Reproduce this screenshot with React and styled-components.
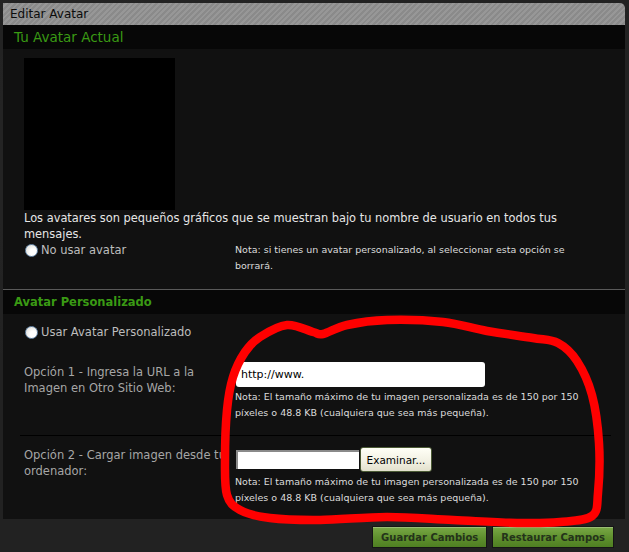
import React from 'react';
import styled, { createGlobalStyle } from 'styled-components';

const GlobalStyle = createGlobalStyle`
  html, body {
    margin: 0;
    padding: 0;
    background: #232323;
  }
  body {
    font-family: "DejaVu Sans", "Liberation Sans", sans-serif;
  }
`;

const scribblePoints = [
  [260, 337], [287, 325], [313, 332], [323, 334], [347, 325], [387, 320],
  [443, 322], [487, 331], [533, 338], [558, 343], [577, 361], [592, 395],
  [599, 443], [598, 493], [592, 516], [560, 522], [520, 523], [453, 520],
  [387, 517], [320, 520], [270, 518], [240, 510], [227, 495], [225, 460],
  [227, 410], [233, 377], [245, 352],
];

// closed catmull-rom -> cubic bezier
const smoothPath = (pts) => {
  const n = pts.length;
  let d = `M${pts[0][0]},${pts[0][1]}`;
  for (let i = 0; i < n; i++) {
    const p0 = pts[(i - 1 + n) % n];
    const p1 = pts[i];
    const p2 = pts[(i + 1) % n];
    const p3 = pts[(i + 2) % n];
    const c1x = p1[0] + (p2[0] - p0[0]) / 6;
    const c1y = p1[1] + (p2[1] - p0[1]) / 6;
    const c2x = p2[0] - (p3[0] - p1[0]) / 6;
    const c2y = p2[1] - (p3[1] - p1[1]) / 6;
    d += ` C${c1x},${c1y} ${c2x},${c2y} ${p2[0]},${p2[1]}`;
  }
  return d + ' Z';
};

const App = () => {
  return (
    <Page>
      <GlobalStyle />
      <Panel>
        <TitleBar>Editar Avatar</TitleBar>
        <SectionHead>Tu Avatar Actual</SectionHead>
        <SectionBody $pad="9px 10px 15px 21px">
          <AvatarBox />
          <Description>
            Los avatares son pequeños gráficos que se muestran bajo tu nombre de usuario en todos tus mensajes.
          </Description>
          <FieldRow>
            <RadioLabel>
              <Radio type="radio" name="avatar" />
              No usar avatar
            </RadioLabel>
            <Note>Nota: si tienes un avatar personalizado, al seleccionar esta opción se borrará.</Note>
          </FieldRow>
        </SectionBody>
        <SectionHead $bold $ruled>Avatar Personalizado</SectionHead>
        <SectionBody $pad="10px 0 13px 0">
          <RadioRow>
            <RadioLabel>
              <Radio type="radio" name="avatar" />
              Usar Avatar Personalizado
            </RadioLabel>
          </RadioRow>
          <OptionRow $ruled>
            <FieldLabel>Opción 1 - Ingresa la URL a la Imagen en Otro Sitio Web:</FieldLabel>
            <div>
              <UrlInput type="text" defaultValue="http://www." />
              <Note>Nota: El tamaño máximo de tu imagen personalizada es de 150 por 150 píxeles o 48.8 KB (cualquiera que sea más pequeña).</Note>
            </div>
          </OptionRow>
          <OptionRow $top="11px">
            <FieldLabel $tight>
              Opción 2 - Cargar imagen desde tu
              <br />
              ordenador:
            </FieldLabel>
            <div>
              <FileControl>
                <FileText />
                <BrowseButton type="button">Examinar...</BrowseButton>
              </FileControl>
              <Note>Nota: El tamaño máximo de tu imagen personalizada es de 150 por 150 píxeles o 48.8 KB (cualquiera que sea más pequeña).</Note>
            </div>
          </OptionRow>
        </SectionBody>
      </Panel>
      <Footer>
        <ActionButton type="button">Guardar Cambios</ActionButton>
        <ActionButton type="button">Restaurar Campos</ActionButton>
      </Footer>
      <Scribble width="629" height="552" viewBox="0 0 629 552">
        <defs>
          <filter id="soft" x="-5%" y="-5%" width="110%" height="110%">
            <feGaussianBlur stdDeviation="0.7" />
          </filter>
        </defs>
        <path
          d={smoothPath(scribblePoints)}
          fill="none"
          stroke="#ff0000"
          strokeWidth="8.5"
          strokeLinejoin="round"
          filter="url(#soft)"
        />
      </Scribble>
    </Page>
  );
};

export default App;

const Page = styled.div`
  position: relative;
  width: 629px;
  height: 552px;
  padding: 3px 4px 0 3px;
  box-sizing: border-box;
  background:
    radial-gradient(circle at 20% 30%, rgba(255, 255, 255, 0.02), transparent 40%),
    #222;
  overflow: hidden;
`;

const Panel = styled.div`
  background: #111;
  border-top-right-radius: 5px;
  overflow: hidden;
`;

const TitleBar = styled.div`
  height: 22px;
  line-height: 22px;
  padding-left: 7px;
  font-size: 12px;
  color: #0c0c0c;
  background: repeating-linear-gradient(
    135deg,
    #8a8a8a 0px,
    #8a8a8a 2px,
    #979797 2px,
    #979797 4px
  );
`;

const SectionHead = styled.div`
  height: 24px;
  line-height: 24px;
  padding-left: 11px;
  font-size: ${(p) => (p.$bold ? '11.5px' : '13.5px')};
  font-weight: ${(p) => (p.$bold ? 'bold' : 'normal')};
  color: #3a9a14;
  background: #070707;
  border-top: ${(p) => (p.$ruled ? '1px solid #5a5a5a' : 'none')};
`;

const SectionBody = styled.div`
  padding: ${(p) => p.$pad};
  background: #111;
`;

const AvatarBox = styled.div`
  width: 151px;
  height: 152px;
  background: #000;
`;

const Description = styled.div`
  font-size: 11.4px;
  line-height: 16px;
  color: #e6e6e6;
`;

const FieldRow = styled.div`
  display: grid;
  grid-template-columns: 211px 340px;
  align-items: start;
`;

const RadioRow = styled.div`
  padding-left: 21px;
  margin-bottom: 22px;
`;

const RadioLabel = styled.label`
  display: flex;
  align-items: center;
  gap: 3px;
  font-size: 11.5px;
  line-height: 16px;
  color: #bdbdbd;
`;

const Radio = styled.input`
  appearance: none;
  margin: 0 0 0 1px;
  width: 13px;
  height: 13px;
  border-radius: 50%;
  border: 1px solid #6f8fb0;
  box-sizing: border-box;
  background: radial-gradient(circle at 65% 65%, #ffffff 30%, #d6d6d0 100%);
`;

const Note = styled.div`
  font-size: 9.5px;
  line-height: 16px;
  color: #dcdcdc;
`;

const OptionRow = styled.div`
  display: grid;
  grid-template-columns: 211px 360px;
  align-items: start;
  margin: 0 14px 0 17px;
  padding: ${(p) => p.$top || '0'} 0 ${(p) => (p.$ruled ? '14px' : '0')} 4px;
  border-bottom: ${(p) => (p.$ruled ? '1px solid #000' : 'none')};

  ${Note} {
    margin-top: 2px;
  }
`;

const FieldLabel = styled.div`
  font-size: 11.5px;
  line-height: 16px;
  color: #a6a6a6;
  padding-top: ${(p) => (p.$tight ? '0' : '2px')};
  padding-right: ${(p) => (p.$tight ? '0' : '14px')};
  white-space: ${(p) => (p.$tight ? 'nowrap' : 'normal')};
`;

const UrlInput = styled.input`
  box-sizing: border-box;
  width: 249px;
  height: 25px;
  margin: 0 0 0 1px;
  padding: 0 5px;
  border: none;
  border-radius: 3px;
  background: #fff;
  color: #000;
  font-family: "DejaVu Sans", sans-serif;
  font-size: 11px;
  outline: none;
`;

const FileControl = styled.div`
  display: flex;
  align-items: center;
  height: 25px;
  padding-left: 1px;
`;

const FileText = styled.div`
  box-sizing: border-box;
  width: 123px;
  height: 19px;
  background: #fff;
  border-top: 2px solid #8a8a8a;
  border-left: 2px solid #8a8a8a;
`;

const BrowseButton = styled.button`
  box-sizing: border-box;
  width: 72px;
  height: 25px;
  margin-left: 1px;
  padding: 0;
  border: 1px solid #4b5a35;
  border-radius: 3px;
  background: linear-gradient(#fffff6, #f1f0e2 60%, #e2e0cc);
  color: #000;
  font-family: "DejaVu Sans", sans-serif;
  font-size: 10.5px;
`;

const Footer = styled.div`
  display: flex;
  justify-content: flex-end;
  gap: 5px;
  padding: 7px 11px 0 0;
`;

const ActionButton = styled.button`
  box-sizing: border-box;
  height: 22px;
  padding: 0 8px;
  border: 1px solid #151515;
  background: linear-gradient(#79a846, #5e8f2d 55%, #4f7f22);
  box-shadow: inset 0 1px 0 rgba(255, 255, 255, 0.25);
  color: #24331a;
  font-family: "DejaVu Sans", sans-serif;
  font-size: 10px;
  font-weight: bold;
`;

const Scribble = styled.svg`
  position: absolute;
  left: 0;
  top: 0;
  pointer-events: none;
`;
